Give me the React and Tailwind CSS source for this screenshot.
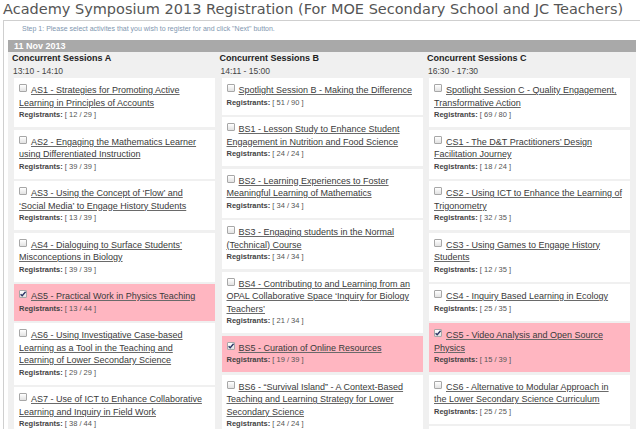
const columns = [
  {
    name: 'Concurrent Sessions A',
    time: '13:10 - 14:10',
    sessions: [
      { lines: ['AS1 - Strategies for Promoting Active', 'Learning in Principles of Accounts'], reg: '12 / 29' },
      { lines: ['AS2 - Engaging the Mathematics Learner', 'using Differentiated Instruction'], reg: '39 / 39' },
      { lines: ['AS3 - Using the Concept of ‘Flow’ and', '‘Social Media’ to Engage History Students'], reg: '13 / 39' },
      { lines: ['AS4 - Dialoguing to Surface Students’', 'Misconceptions in Biology'], reg: '39 / 39' },
      { lines: ['AS5 - Practical Work in Physics Teaching'], reg: '13 / 44', checked: true },
      {
        lines: ['AS6 - Using Investigative Case-based', 'Learning as a Tool in the Teaching and', 'Learning of Lower Secondary Science'],
        reg: '29 / 29',
      },
      { lines: ['AS7 - Use of ICT to Enhance Collaborative', 'Learning and Inquiry in Field Work'], reg: '38 / 44' },
    ],
  },
  {
    name: 'Concurrent Sessions B',
    time: '14:11 - 15:00',
    sessions: [
      { lines: ['Spotlight Session B - Making the Difference'], reg: '51 / 90' },
      { lines: ['BS1 - Lesson Study to Enhance Student', 'Engagement in Nutrition and Food Science'], reg: '24 / 24' },
      { lines: ['BS2 - Learning Experiences to Foster', 'Meaningful Learning of Mathematics'], reg: '34 / 34' },
      { lines: ['BS3 - Engaging students in the Normal', '(Technical) Course'], reg: '34 / 34' },
      {
        lines: ['BS4 - Contributing to and Learning from an', 'OPAL Collaborative Space ‘Inquiry for Biology', 'Teachers’'],
        reg: '21 / 34',
      },
      { lines: ['BS5 - Curation of Online Resources'], reg: '19 / 39', checked: true },
      {
        lines: ['BS6 - “Survival Island” - A Context-Based', 'Teaching and Learning Strategy for Lower', 'Secondary Science'],
        reg: '24 / 24',
      },
    ],
  },
  {
    name: 'Concurrent Sessions C',
    time: '16:30 - 17:30',
    sessions: [
      { lines: ['Spotlight Session C - Quality Engagement,', 'Transformative Action'], reg: '69 / 80' },
      { lines: ['CS1 - The D&T Practitioners’ Design', 'Facilitation Journey'], reg: '18 / 24' },
      { lines: ['CS2 - Using ICT to Enhance the Learning of', 'Trigonometry'], reg: '32 / 35' },
      { lines: ['CS3 - Using Games to Engage History', 'Students'], reg: '12 / 35' },
      { lines: ['CS4 - Inquiry Based Learning in Ecology'], reg: '25 / 35' },
      { lines: ['CS5 - Video Analysis and Open Source', 'Physics'], reg: '15 / 39', checked: true },
      { lines: ['CS6 - Alternative to Modular Approach in', 'the Lower Secondary Science Curriculum'], reg: '25 / 25' },
      { empty: true },
    ],
  },
];

function Checkbox({ checked }) {
  return (
    <span className="relative mr-[4px] inline-block h-[8px] w-[8px] align-[1px] rounded-[1px] border border-[#a7a7a7] bg-gradient-to-b from-[#ffffff] to-[#e2e2e2]">
      {checked && (
        <svg viewBox="0 0 8 8" className="absolute left-[-1px] top-[-1px] h-[8px] w-[8px]">
          <path d="M1.6 4.2 L3.2 5.8 L6.6 1.8" fill="none" stroke="#2d3566" strokeWidth="1.4" />
        </svg>
      )}
    </span>
  );
}

function SessionCard({ session }) {
  if (session.empty) return <div className="h-[48px] bg-white" />;
  return (
    <div className={`pl-[5px] pr-[4px] pt-[6px] pb-[6px] ${session.checked ? 'bg-[#ffb6c1]' : 'bg-white'}`}>
      <div className="text-[9px] leading-[12.5px] text-[#3a3a3a] whitespace-nowrap">
        {session.lines.map((line, i) => (
          <div key={i}>
            {i === 0 && <Checkbox checked={session.checked} />}
            <span className="underline decoration-[#6a6a6a] underline-offset-[1px]">{line}</span>
          </div>
        ))}
      </div>
      <p className="text-[7.5px] leading-[12px] text-[#555]">
        <span className="font-bold text-[#444]">Registrants:</span> [ {session.reg} ]
      </p>
    </div>
  );
}

export default function App() {
  return (
    <div className="h-[429px] w-[640px] overflow-hidden bg-white font-['Liberation_Sans',Arial,sans-serif]">
      <h1 className="h-[20px] whitespace-nowrap pl-[3px] font-['DejaVu_Sans',sans-serif] text-[14.5px] leading-[19px] text-[#555]">
        Academy Symposium 2013 Registration (For MOE Secondary School and JC Teachers)
      </h1>
      <div className="ml-[3px] border-l border-t border-[#cfcfcf] pl-[4px] pr-[4px]">
        <p className="h-[19px] pl-[14px] pt-[2px] text-[7px] leading-[12px] text-[#7f97b0]">
          Step 1: Please select activites that you wish to register for and click "Next" button.
        </p>
        <div className="h-[12px] bg-[#a9a9a9] pl-[6px] text-[9px] font-bold leading-[12px] text-white">11 Nov 2013</div>
        <div className="grid h-[400px] grid-cols-3 gap-x-[2.5px] bg-[#f0f0f0] px-[4px]">
          {columns.map((col) => (
            <div key={col.name}>
              <h2 className="text-[9px] font-bold leading-[13px] text-[#222]">{col.name}</h2>
              <p className="pl-[1px] text-[8.5px] leading-[13px] text-[#444]">{col.time}</p>
              <div className="mx-[2px] flex flex-col gap-[2.5px]">
                {col.sessions.map((s, i) => (
                  <SessionCard key={i} session={s} />
                ))}
              </div>
            </div>
          ))}
        </div>
      </div>
    </div>
  );
}
